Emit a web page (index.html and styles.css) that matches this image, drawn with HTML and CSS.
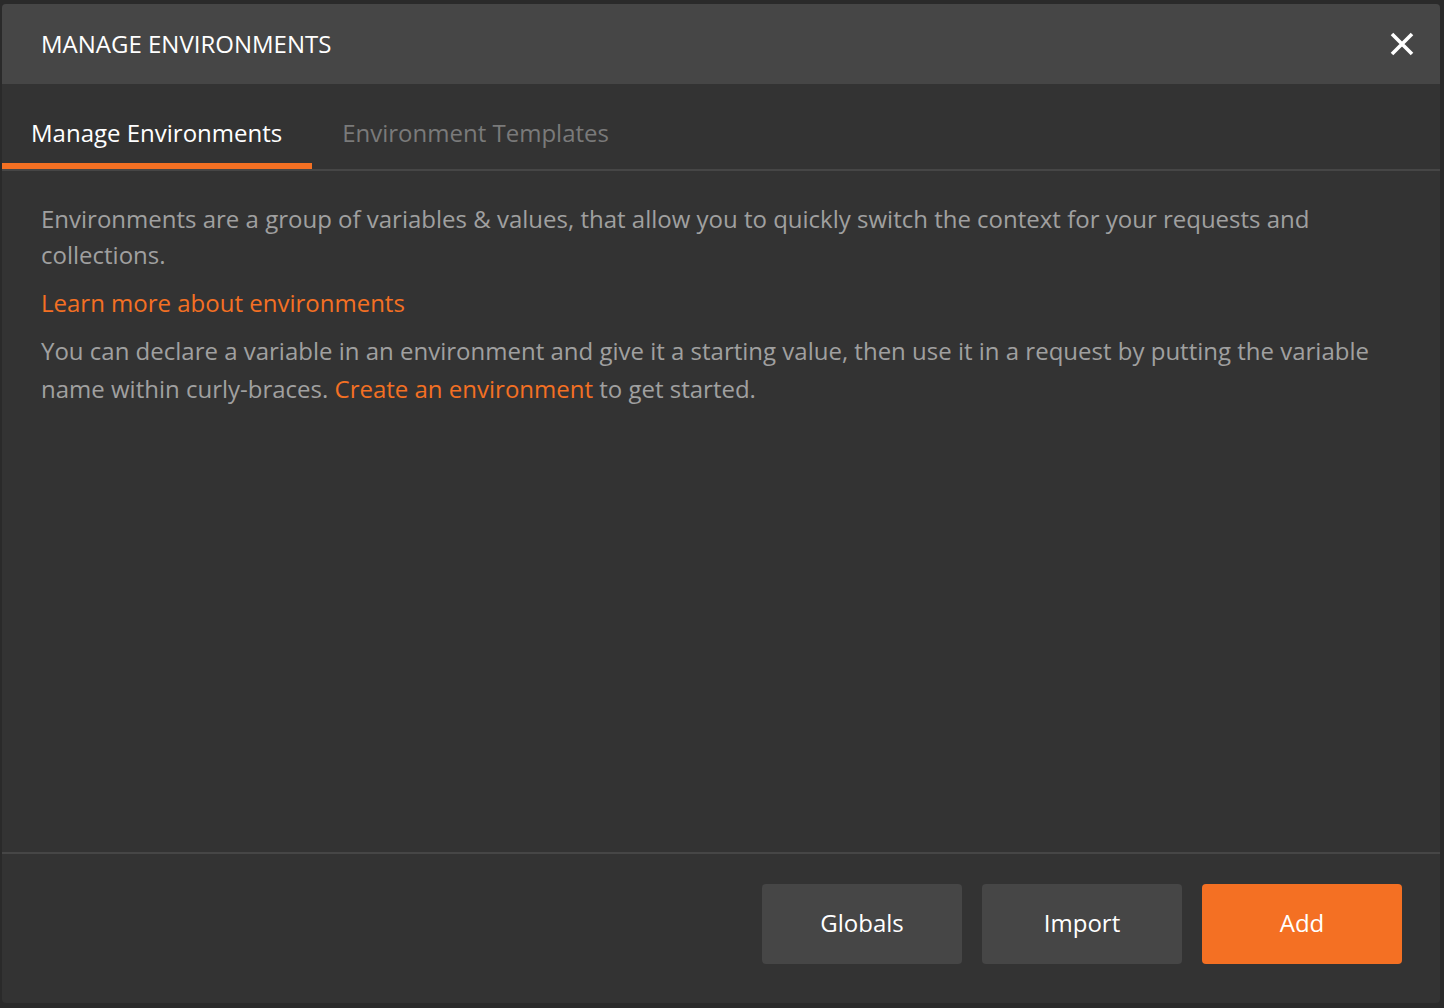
FILE: index.html
```html
<!DOCTYPE html>
<html>
<head>
<meta charset="utf-8">
<link rel="stylesheet" href="styles.css">
</head>
<body>
<div class="dialog">
  <div class="header">
    <div class="title">MANAGE ENVIRONMENTS</div>
    <svg class="close" width="24" height="24" viewBox="0 0 24 24"><path d="M2 2 L22 22 M22 2 L2 22" stroke="#ffffff" stroke-width="3.6" stroke-linecap="butt"/></svg>
  </div>
  <div class="tabs">
    <div class="tab active">Manage Environments</div>
    <div class="tab">Environment Templates</div>
  </div>
  <div class="content">
    <p class="para">Environments are a group of variables &amp; values, that allow you to quickly switch the context for your requests and collections.</p>
    <p class="para link-line"><span class="link">Learn more about environments</span></p>
    <p class="para para2">You can declare a variable in an environment and give it a starting value, then use it in a request by putting the variable name within curly-braces. <span class="link">Create an environment</span> to get started.</p>
  </div>
  <div class="footer">
    <button class="btn">Globals</button>
    <button class="btn">Import</button>
    <button class="btn primary">Add</button>
  </div>
</div>
</body>
</html>
```
FILE: styles.css
```css
html, body {
  margin: 0;
  padding: 0;
  background: #2a2a2a;
  font-family: "Open Sans", "Noto Sans", sans-serif;
}
.dialog {
  margin: 4px 0 0 2px;
  width: 1438px;
  height: 999px;
  background: #333333;
  border-radius: 4px;
  display: flex;
  flex-direction: column;
  overflow: hidden;
}
.header {
  height: 80px;
  flex: none;
  background: #464646;
  display: flex;
  align-items: center;
  justify-content: space-between;
  padding: 0 26px 0 39px;
}
.title {
  color: #ffffff;
  font-size: 24px;
  line-height: 32px;
}
.close {
  display: block;
}
.tabs {
  flex: none;
  display: flex;
  border-bottom: 2px solid #464646;
}
.tab {
  padding: 33px 30px 14px 30px;
  font-size: 24px;
  line-height: 32px;
  color: #7a7a7a;
  border-bottom: 6px solid transparent;
}
.tab.active {
  color: #ffffff;
  padding-left: 29px;
  border-bottom-color: #f47023;
}
.content {
  flex: 1;
  padding: 30px 40px 0 39px;
}
.para {
  margin: 0 0 12px 0;
  font-size: 24px;
  line-height: 36px;
  color: #a0a0a0;
}
.para2 {
  margin-top: -1px;
  line-height: 38px;
}
.link {
  color: #f47023;
}
.footer {
  flex: none;
  border-top: 2px solid #464646;
  display: flex;
  justify-content: flex-end;
  gap: 20px;
  padding: 30px 38px 39px 0;
}
.btn {
  width: 200px;
  height: 80px;
  border: none;
  border-radius: 4px;
  background: #464646;
  color: #ffffff;
  font-family: "Open Sans", "Noto Sans", sans-serif;
  font-size: 24px;
  line-height: 32px;
  padding: 0 0 2px 0;
}
.btn.primary {
  background: #f47023;
}
```
